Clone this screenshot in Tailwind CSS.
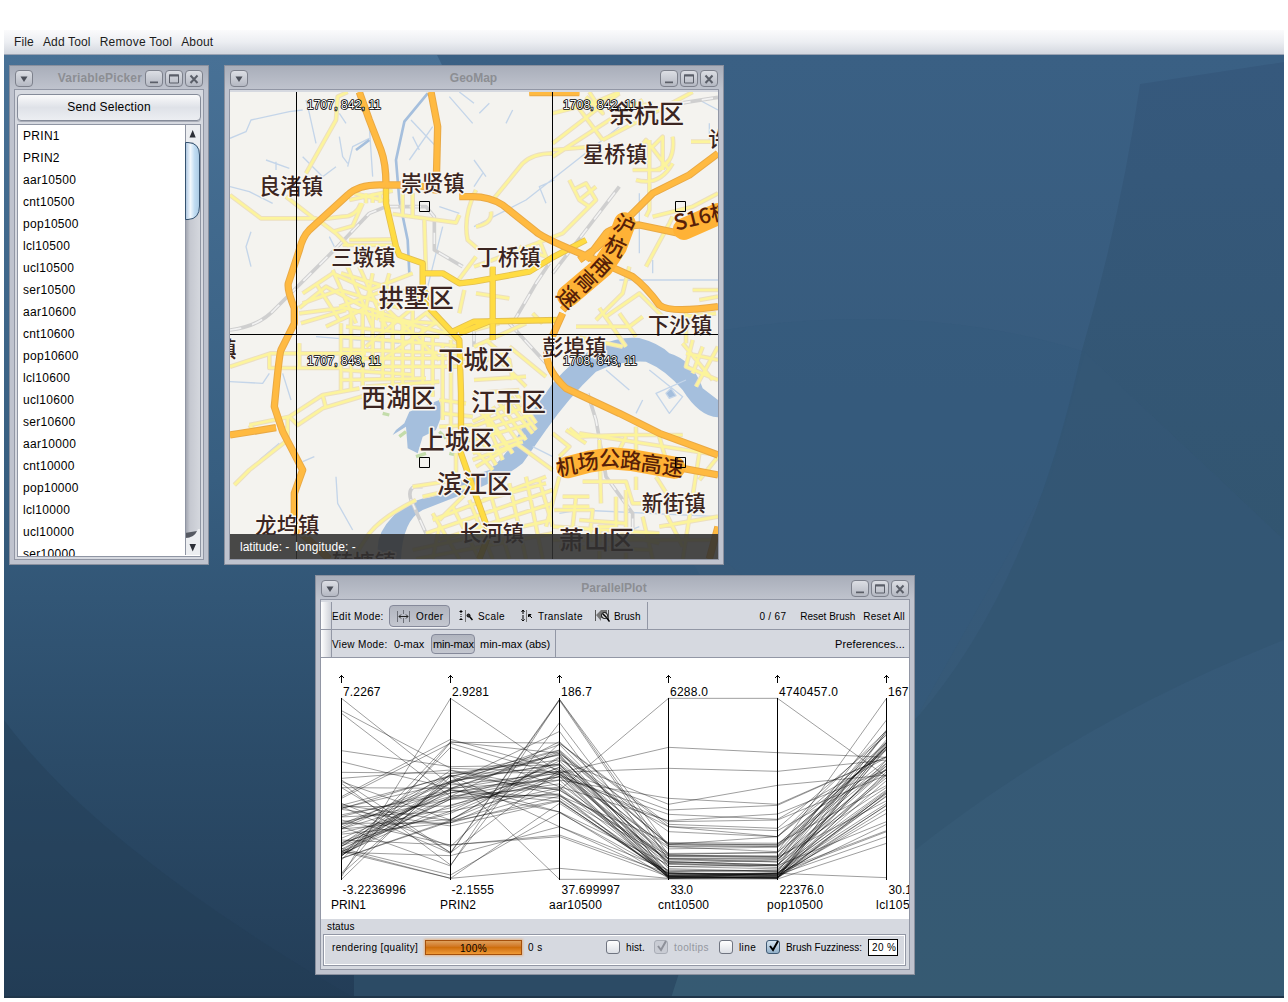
<!DOCTYPE html>
<html lang="en">
<head>
<meta charset="utf-8">
<title>GeoViz Toolkit</title>
<script src="https://cdn.jsdelivr.net/npm/@tailwindcss/browser@4"></script>
</head>
<body class="w-[1288px] h-[1002px] overflow-hidden bg-white font-['Liberation_Sans',Arial,sans-serif] text-[12px] text-black px-1 pt-[30px]">

<!-- shared symbols -->
<svg class="hidden">
  <symbol id="btn-menu" viewBox="0 0 18 17"><path d="M5.500 6h7L9 11.500z" fill="#4b4f59"/></symbol>
  <symbol id="btn-min" viewBox="0 0 18 17"><path d="M5 12.500h8" stroke="#f4f5f8" stroke-width="2"/><path d="M5 12h8" stroke="#5b5f69" stroke-width="2"/></symbol>
  <symbol id="btn-max" viewBox="0 0 18 17"><path d="M4.500 4.500h9v8h-9z" fill="none" stroke="#5b5f69"/><path d="M4 5h10" stroke="#5b5f69" stroke-width="2"/></symbol>
  <symbol id="btn-close" viewBox="0 0 18 17"><path d="M5.500 5l7 7.500m0-7.500l-7 7.500" fill="none" stroke="#5b5f69" stroke-width="2"/></symbol>
</svg>

<nav class="h-[25px] flex items-center gap-[9px] pl-[10px] pb-px tracking-[0.15px] bg-linear-to-b from-[#fbfbfc] via-[#eceef2] to-[#d3d7df] border-b border-[#9aa3b3] text-[#1c1c1c]">
  <span>File</span><span>Add Tool</span><span class="tracking-[0.25px]">Remove Tool</span><span>About</span>
</nav>

<main class="relative h-[943px] overflow-hidden bg-[#375f83]">
  <svg class="absolute inset-0" width="1280" height="943" viewBox="4 55 1280 943">
    <defs>
      <linearGradient id="sky" x1="0" y1="0" x2="0" y2="1"><stop offset="0" stop-color="#487196"/><stop offset=".45" stop-color="#375e80"/><stop offset=".75" stop-color="#2b4b68"/><stop offset="1" stop-color="#233d57"/></linearGradient>
      <linearGradient id="facet" x1="0" y1="0" x2="0" y2="1"><stop offset="0" stop-color="#3a6084"/><stop offset=".5" stop-color="#36597a"/><stop offset="1" stop-color="#365a72"/></linearGradient>
      <linearGradient id="facet2" x1="0" y1="0" x2="0" y2="1"><stop offset="0" stop-color="#36597d"/><stop offset="1" stop-color="#325570"/></linearGradient>
    </defs>
    <path d="M4 55h1280v943H4z" fill="url(#sky)"/>
    <path d="M437 55C470 120 540 300 700 575L671 998H1284V55z" fill="url(#facet)"/>
    <path d="M1140 84L1284 62V540L1082 350Q1120 220 1140 84z" fill="url(#facet2)"/>
    <path d="M724 330Q920 300 1085 352L1050 480Q960 640 915 720L724 560z" fill="#34597b" opacity=".5"/>
    <path d="M915 720Q1030 590 1082 350L1284 540V640Q1080 720 915 850z" fill="#31526d" opacity=".45"/>
    <path d="M4 720Q100 850 354 998H4z" fill="#213b53" opacity=".35"/>
    <path d="M354 970H680L671 998H354z" fill="#2c4b65"/>
    <path d="M4 997h1280" stroke="#20364a" stroke-width="2"/>
  </svg>

  <!-- VariablePicker -->
  <section class="absolute left-[5px] top-[10px] w-[200px] h-[500px] border border-[#8a909e] bg-[#bfc3ce] flex flex-col">
    <header class="h-[23px] shrink-0 flex items-start pt-1 px-[5px] gap-[2px] bg-linear-to-b from-[#a9aeba] to-[#bfc3cd]">
      <span class="w-[18px] h-[17px] rounded-[4px] border border-[#7d818c] bg-linear-to-b from-[#dcdee4] to-[#b5b9c3]"><svg class="-m-px size-[18px]"><use href="#btn-menu"/></svg></span>
      <b class="flex-1 text-right text-[#8c8e93] leading-[17px] pr-px tracking-[0.15px]">VariablePicker</b>
      <span class="w-[18px] h-[17px] rounded-[4px] border border-[#7d818c] bg-linear-to-b from-[#dcdee4] to-[#b5b9c3]"><svg class="-m-px size-[18px]"><use href="#btn-min"/></svg></span>
      <span class="w-[18px] h-[17px] rounded-[4px] border border-[#7d818c] bg-linear-to-b from-[#dcdee4] to-[#b5b9c3]"><svg class="-m-px size-[18px]"><use href="#btn-max"/></svg></span>
      <span class="w-[18px] h-[17px] rounded-[4px] border border-[#7d818c] bg-linear-to-b from-[#dcdee4] to-[#b5b9c3]"><svg class="-m-px size-[18px]"><use href="#btn-close"/></svg></span>
    </header>
    <div class="mx-1 mb-1 flex-1 min-h-0 border border-[#9297a5] bg-[#d6d9e0] px-[2px] pt-1 pb-[2px] flex flex-col gap-[3px]">
      <button class="h-[27px] shrink-0 rounded-[4px] border border-[#858b99] bg-linear-to-b from-[#fafafb] via-[#dfe2e8] to-[#eceef2] tracking-[0.2px] leading-none pb-[2px] shadow-[0_1px_0_#a9adb8]">Send Selection</button>
      <div class="flex-1 min-h-0 border border-[#8f95a3] bg-white flex overflow-hidden">
        <ul class="flex-1 pl-[5px] leading-[22px] tracking-[0.3px]">
          <li>PRIN1</li><li>PRIN2</li><li>aar10500</li><li>cnt10500</li><li>pop10500</li><li>lcl10500</li><li>ucl10500</li><li>ser10500</li><li>aar10600</li><li>cnt10600</li><li>pop10600</li><li>lcl10600</li><li>ucl10600</li><li>ser10600</li><li>aar10000</li><li>cnt10000</li><li>pop10000</li><li>lcl10000</li><li>ucl10000</li><li>ser10000</li>
        </ul>
        <svg class="shrink-0" width="15" height="430" viewBox="0 0 15 430">
          <defs>
            <linearGradient id="track"><stop offset="0" stop-color="#9a9ea9"/><stop offset=".3" stop-color="#c5c8d0"/><stop offset="1" stop-color="#d6d9df"/></linearGradient>
            <linearGradient id="thumb"><stop offset="0" stop-color="#a9c3de"/><stop offset=".35" stop-color="#f2f8fd"/><stop offset=".65" stop-color="#c0dcf2"/><stop offset="1" stop-color="#a9c9e3"/></linearGradient>
          </defs>
          <path d="M0 0h16v430H0z" fill="url(#track)"/>
          <path d="M0 0h16v26L8 17H0zM0 413q10 0 13-9h3v27H0z" fill="#eceef1"/>
          <path d="M0 413q9 0 12-7l-12 2z" fill="#555962"/>
          <path d="M.5 0v430" stroke="#8f95a3"/>
          <path d="M.5 17.500H3Q14.500 18 14.500 30V81Q14.500 94 3 94.500H.5z" fill="url(#thumb)" stroke="#365370"/>
          <path d="M4.500 12.500L7.700 5l3 7.500zM4.500 419h6.500l-3.300 7.500z" fill="#2d3038"/>
        </svg>
      </div>
    </div>
  </section>

  <!-- GeoMap -->
  <section class="absolute left-[220px] top-[10px] w-[500px] h-[500px] border border-[#8a909e] bg-[#bfc3ce] flex flex-col">
    <header class="h-[23px] shrink-0 flex items-start pt-1 px-[5px] gap-[2px] bg-linear-to-b from-[#a9aeba] to-[#bfc3cd]">
      <span class="w-[18px] h-[17px] rounded-[4px] border border-[#7d818c] bg-linear-to-b from-[#dcdee4] to-[#b5b9c3]"><svg class="-m-px size-[18px]"><use href="#btn-menu"/></svg></span>
      <b class="flex-1 text-center text-[#8c8e93] leading-[17px] pl-[39px]">GeoMap</b>
      <span class="w-[18px] h-[17px] rounded-[4px] border border-[#7d818c] bg-linear-to-b from-[#dcdee4] to-[#b5b9c3]"><svg class="-m-px size-[18px]"><use href="#btn-min"/></svg></span>
      <span class="w-[18px] h-[17px] rounded-[4px] border border-[#7d818c] bg-linear-to-b from-[#dcdee4] to-[#b5b9c3]"><svg class="-m-px size-[18px]"><use href="#btn-max"/></svg></span>
      <span class="w-[18px] h-[17px] rounded-[4px] border border-[#7d818c] bg-linear-to-b from-[#dcdee4] to-[#b5b9c3]"><svg class="-m-px size-[18px]"><use href="#btn-close"/></svg></span>
    </header>
    <div class="relative mx-1 mb-1 flex-1 min-h-0 border border-[#9297a5] bg-[#d6d9e0] pt-[2px]">
      <svg class="block" width="488" height="467" viewBox="12 96 1464 1401" fill="none" stroke-linejoin="round">
        <defs>
          <g id="minor">
            <!-- north west -->
            <path d="M365 96L335 110L330 180L240 340M12 405L105 475H270L330 520L370 560M180 410L270 480L350 470Q390 470 405 430M370 420L500 392M385 400L490 425M320 515L380 498L410 430M420 400V430M440 400V428M462 400V428M500 462L690 488L700 465M595 480L600 640M530 400V470M560 400V470M350 555L500 555M370 540L500 538M750 390Q710 470 725 540L760 570M750 590L690 670M700 760L715 690"/>
            <path d="M230 700L320 640L430 690L560 640M220 744L300 680L420 744M270 670L340 780M320 630L390 790M360 610L440 800M400 620L480 800M230 730L340 690L520 744M340 740L480 690L600 700M440 640L420 744M490 640L450 780M300 800L420 744L560 790M345 640L545 700"/>
            <path d="M220 760L350 744M225 790L360 750M12 920L135 880H420M130 880V924H220M220 850V924H345M345 790V990M375 744V990M410 744V980M440 744V930M360 800L640 830M345 830L700 858M350 868L690 880M400 895H720M430 920H700M350 930L560 944M345 960L600 955M420 980L640 965M470 744V960M500 780V990M530 780V970M560 744V960M590 800V970M620 830V1010M650 850V1080M675 840V1150M480 744L640 900M560 744L420 860M640 780L470 900"/>
            <path d="M340 740L700 830M520 820L620 744M600 760L700 850M460 780L640 790"/>
            <path d="M70 1095L190 1070L290 1005L400 985M190 1070L215 1095L290 1045L440 1000M70 1095L95 1120M160 1100L185 1110V1140L70 1230L25 1275M290 1005L300 1045M185 1070V1110M640 1020L720 1030M650 1060L740 1070M640 1100L740 1095M660 1140L750 1140M690 1180V1260"/>
            <!-- north east -->
            <path d="M750 500Q800 490 795 455M800 420L890 310Q920 280 980 280M980 290L1150 180L1250 120M980 250L1110 150L1180 100M1040 120L1130 240M1090 96L1130 160L1080 110M980 270L1100 260M980 160L1100 130L1180 96M1130 240L1280 160L1400 96M1180 150L1280 130M1030 360L1060 420L1090 440L1110 420L1080 370L1040 390M1110 420L1010 520L800 600L744 620M1060 420L1110 380M870 570L900 600M940 540L960 590L880 560M1270 240V450L1260 470M1280 470L1400 440L1476 400M1340 470L1330 490L1260 620M1340 230Q1350 310 1290 330M1220 290L1260 240L1330 330M1280 260L1310 230L1310 330M1220 330L1300 330L1330 300M1230 360Q1300 380 1340 310M1395 245H1476M1210 620L1190 700L1110 780M1400 690H1476M1420 720L1476 710M1370 770L1470 760M1140 770L1240 700L1310 770M1380 744V850M1410 744V820M750 700L850 715M920 760L950 790"/>
            <path d="M744 810L820 790M744 860L900 790M780 840L850 900L860 960M744 920L800 890M800 880L900 980M744 960L900 950M740 1000L880 990M850 860L960 950M1050 800L1210 800L1250 770M1050 830L1190 860M1120 744L1200 860M1230 830L1180 760M1370 850L1460 960M1400 840L1380 920L1476 960M1430 860L1400 940M1476 860L1410 980M1380 880L1476 900"/>
            <!-- riverside streets -->
            <path d="M740 1100L900 1040M740 1140L920 1090M740 1180L900 1130M750 1220L870 1150M760 1050L850 1170M800 1040L880 1150M840 1020L920 1120M780 1080L830 1200M870 1000L930 1090M740 1160L800 1230M870 1150L980 1230M980 1120L1030 1160L1000 1190M1020 1110L1080 1150M1060 1120L1476 1185M1030 1105L1060 1130L1180 1125H1370M1230 1100V1180M1120 1140L1125 1330M1200 1130L1170 1190M1300 1130L1320 1200M1420 1180L1370 1500M1476 1190L1420 1260M1000 1250L960 1400M980 1400L1300 1420"/>
            <path d="M740 1085L890 1015M740 1120L915 1065M740 1200L890 1145M780 1060L860 1180M820 1030L900 1140M855 1010L930 1110M750 1110L810 1215"/>
            <path d="M1070 1265H1200L1220 1330H1360M1010 1310H1090M1010 1340H1090M1050 1310L1040 1400M1200 1290V1497M1170 1310V1400H1120V1497M985 1350H1100L1090 1440M1250 1370L1280 1497M1320 1360L1370 1460M1340 1330L1290 1250M980 1440L1476 1440M1000 1460L1280 1470M1300 1400L1476 1370M1230 1250V1290M1060 1380L1200 1390M1160 1420L1300 1450"/>
            <path d="M560 1280L690 1260M570 1320Q470 1370 430 1420L380 1497M590 1310L720 1280M640 1380L720 1300M600 1420L980 1290M640 1440L980 1330M620 1380L960 1250M620 1360L700 1497M680 1340L760 1497M730 1320L800 1497M790 1290L850 1497M850 1270L900 1497M900 1250L950 1497M560 1470L980 1380M570 1497L980 1420M640 1400L620 1497M940 1260L980 1400M770 1320L960 1270"/>
          </g>
          <g id="arterial">
            <path d="M480 380V430L510 560L520 585L590 610V640H650L700 670L744 665L910 635L980 592L1080 540M590 640V690L620 720M560 690L610 744L700 840L705 1000V1180L740 1280L790 1420L760 1497M680 815L744 785L1000 780M800 620V840M700 820L800 780"/>
          </g>
          <g id="motorway">
            <path d="M400 96L430 180L465 270Q480 310 480 375M480 375H570L640 390M480 375Q400 370 365 405L250 510Q230 530 220 570L187 670Q183 690 205 744V790L165 870Q160 880 145 1040L170 1115L230 1230L205 1300V1400L310 1497M12 1125L150 1103M615 96L635 200L630 400M700 410H740Q790 410 830 435L930 515Q950 535 1110 600L1220 650Q1260 680 1300 735Q1330 760 1476 740M1476 280L1390 345L1280 400L1210 470L1110 565L1060 600M1080 600L1140 520Q1160 500 1240 495L1360 520M1010 760L965 860Q950 920 1020 985L1180 1060L1300 1120L1476 1185M1370 1225L1476 1245M910 98H1060M1476 1400L1450 1497M1010 750L1190 540"/>
          </g>
        </defs>
        <path d="M12 96h1464v1401H12z" fill="#f4f3ef"/>
        <!-- water -->
        <path d="M1110 860Q1180 828 1240 834Q1300 850 1330 880Q1400 900 1430 985L1476 1020V1072Q1420 1070 1370 990Q1320 930 1260 905Q1180 900 1110 935Q1030 1010 960 1110L890 1210Q830 1260 680 1315L590 1350Q530 1380 525 1497H460Q440 1430 500 1370Q540 1320 620 1310Q690 1260 790 1230Q860 1170 900 1080Q960 1000 980 970Q1040 900 1110 860z" fill="#a5bfdd"/>
        <path d="M550 1055L640 1020L650 1060L630 1110L590 1130L575 1180L545 1165L540 1100L500 1125L510 1110L535 1090z" fill="#a5bfdd"/>
        <path d="M470 1060l20 5M520 1130l20 -15M570 1190l30-10M640 1115l20 20M670 1180l20 5" stroke="#c3dcaa" stroke-width="10"/>
        <g stroke="#c4d5e9" stroke-width="4">
          <path d="M12 235L60 215L75 180L190 155L230 150M120 300L190 325M150 305V330M75 515L60 560L75 620M230 290L290 350L330 320M340 230L350 290L365 310M430 200L440 350M12 380L70 395L140 430M340 160L360 190M270 250L250 160L240 120M365 320L380 260L430 235M620 200L550 300M555 180L640 270M560 230L580 270M670 110L740 190M700 96L744 130M650 500L600 700M640 440L700 460M310 530L325 560M12 965L110 970L130 940M170 940L195 1020M270 830L520 850M100 1200L160 1150M230 1205L265 1190M330 1250L335 1330L380 1410M744 300L780 350M744 380L770 340M840 190L860 150M760 160L790 130M744 500L900 420L1180 200M960 430L940 380L985 360M1240 400V580M1280 640V600M1180 660L1300 660H1476M1140 930L1210 990M1270 930L1370 1010L1330 1060L1290 1000L1380 960M1230 1060L1250 1020M1000 1360L1060 1350L1476 1370M920 1160L980 1190M1140 1440L1240 1400M1420 120L1476 150M1450 250V190"/>
          <path d="M605 100L535 185L510 300L520 420L545 540L550 640M390 270L430 240" stroke="#a5bfdd" stroke-width="8"/>
          <path d="M1320 1000l15 -15l15 22l-20 8z" fill="#a5bfdd"/>
        </g>
        <!-- railways -->
        <g stroke="#cfcfcf" stroke-width="11"><path id="rail" d="M12 810Q100 800 150 744L320 575L430 460L480 440H600L625 470V570L710 620M980 640L1080 510L1180 380M860 790L930 670L970 610M850 790L960 910M744 810V860M1085 1000L1110 1080L1140 1250L1220 1360V1440M590 1280H565Q545 1290 555 1320L600 1420M1360 130L1476 112"/></g>
        <use href="#rail" stroke="#f2f2f2" stroke-width="5" stroke-dasharray="34 34"/>
        <!-- roads -->
        <use href="#minor" stroke="#ecdfc0" stroke-width="14"/>
        <use href="#minor" stroke="#fcf49c" stroke-width="8"/>
        <use href="#arterial" stroke="#e2bf52" stroke-width="19"/>
        <use href="#arterial" stroke="#ffdc42" stroke-width="14"/>
        <use href="#motorway" stroke="#e9a945" stroke-width="22"/>
        <use href="#motorway" stroke="#ffba41" stroke-width="16"/>
        <!-- place names -->
        <g font-family="'Noto Sans CJK SC',sans-serif" font-size="64" font-weight="500" fill="#3b2521" stroke="#f8f6f1" stroke-width="9" paint-order="stroke">
          <text x="99" y="401">良渚镇</text><text x="524" y="394">崇贤镇</text><text x="316" y="616">三墩镇</text>
          <text x="1071" y="305">星桥镇</text><text x="1447" y="260">许</text><text x="752" y="616">丁桥镇</text>
          <text x="1266" y="818">下沙镇</text><text x="949" y="886">彭埠镇</text><text x="-32" y="892">镇</text>
          <text x="702" y="1444">长河镇</text><text x="1247" y="1354">新街镇</text><text x="88" y="1420">龙坞镇</text><text x="318" y="1530">转塘镇</text>
          <g font-size="75">
            <text x="458" y="740">拱墅区</text><text x="1149" y="189">余杭区</text><text x="637" y="926">下城区</text>
            <text x="735" y="1052">江干区</text><text x="405" y="1041">西湖区</text><text x="581" y="1167">上城区</text>
            <text x="633" y="1298">滨江区</text><text x="999" y="1466">萧山区</text>
          </g>
        </g>
        <path d="M1196 490L1170 560L1130 620L1026 708M1024 1222L1090 1205L1155 1195L1215 1200L1345 1223M1374 507L1476 462" stroke="#ffb236" stroke-width="66" stroke-linecap="round"/>
        <g font-family="'Noto Sans CJK SC',sans-serif" font-size="64" font-weight="500" fill="#571f08" text-anchor="middle">
          <text transform="translate(1196 496) rotate(25)" y="23">沪</text><text transform="translate(1168 560) rotate(25)" y="23">杭</text><text transform="translate(1128 618) rotate(42)" y="23">甬</text><text transform="translate(1080 664) rotate(45)" y="23">高</text><text transform="translate(1026 712) rotate(45)" y="23">速</text>
          <text transform="translate(1022 1220) rotate(-10)" y="23">机</text><text transform="translate(1086 1206) rotate(-8)" y="23">场</text><text transform="translate(1151 1196)" y="23">公</text><text transform="translate(1215 1202) rotate(4)" y="23">路</text><text transform="translate(1277 1212) rotate(8)" y="23">高</text><text transform="translate(1341 1223) rotate(8)" y="23">速</text>
          <text transform="translate(1350 512) rotate(-14)" y="0" text-anchor="start">S16杭</text>
        </g>
        <!-- tile grid -->
        <path d="M211.500 96V1497M979.500 96V1497M12 823.500H1476" stroke="#000" stroke-width="3"/>
        <path d="M580.500 424.500h30v30h-30zM1348.500 424.500h30v30h-30zM580.500 1192.500h30v30h-30zM1348.500 1192.500h30v30h-30z" stroke="#000" stroke-width="3"/>
        <g font-family="'Liberation Sans',Arial,sans-serif" font-size="36" fill="#fff" stroke="#000" stroke-width="5" paint-order="stroke">
          <text x="243" y="148" textLength="222">1707, 842, 11</text><text x="1011" y="148" textLength="222">1708, 842, 11</text><text x="243" y="916" textLength="222">1707, 843, 11</text><text x="1011" y="916" textLength="222">1708, 843, 11</text>
        </g>
      </svg>
      <div class="absolute left-0 bottom-0 w-[488px] h-[25px] bg-[#303030]/88 text-white leading-[26px] pl-[10px] flex gap-[6px]"><span>latitude: -</span><span class="tracking-[0.1px]">longitude: -</span></div>
    </div>
  </section>

  <!-- ParallelPlot -->
  <section class="absolute left-[311px] top-[520px] w-[600px] h-[400px] border border-[#8a909e] bg-[#bfc3ce] flex flex-col">
    <header class="h-[23px] shrink-0 flex items-start pt-1 px-[5px] gap-[2px] bg-linear-to-b from-[#a9aeba] to-[#bfc3cd]">
      <span class="w-[18px] h-[17px] rounded-[4px] border border-[#7d818c] bg-linear-to-b from-[#dcdee4] to-[#b5b9c3]"><svg class="-m-px size-[18px]"><use href="#btn-menu"/></svg></span>
      <b class="flex-1 text-center text-[#8c8e93] leading-[17px] pl-[38px]">ParallelPlot</b>
      <span class="w-[18px] h-[17px] rounded-[4px] border border-[#7d818c] bg-linear-to-b from-[#dcdee4] to-[#b5b9c3]"><svg class="-m-px size-[18px]"><use href="#btn-min"/></svg></span>
      <span class="w-[18px] h-[17px] rounded-[4px] border border-[#7d818c] bg-linear-to-b from-[#dcdee4] to-[#b5b9c3]"><svg class="-m-px size-[18px]"><use href="#btn-max"/></svg></span>
      <span class="w-[18px] h-[17px] rounded-[4px] border border-[#7d818c] bg-linear-to-b from-[#dcdee4] to-[#b5b9c3]"><svg class="-m-px size-[18px]"><use href="#btn-close"/></svg></span>
    </header>
    <div class="mx-1 mb-1 flex-1 min-h-0 border border-[#9297a5] bg-[#d6d9e0] flex flex-col">
      <div class="h-[30px] shrink-0 border-b border-[#9297a5] flex items-stretch text-[10px] tracking-[0.4px] leading-[12px] whitespace-nowrap">
        <i class="w-[11px] mt-[2px] border-r border-[#9297a5] bg-linear-to-r from-white to-[#cfd2d9]"></i>
        <span class="w-[57px] self-center mt-[5px]">Edit Mode:</span>
        <span class="w-[61px] h-[22px] mt-[5px] rounded-[4px] border border-[#85899a] bg-linear-to-b from-[#b1b5bf] to-[#c4c7d0] flex items-center pl-[7px] shadow-[0_1px_0_#f0f1f4]">
          <svg width="14" height="13" viewBox="0 0 14 13" fill="none"><path d="M.5 1v11M12.500 1v11M6.500 0v4M6.500 8v5" stroke="#6c6f77"/><path d="M2 6.500h9M4 4.500l-2 2 2 2M9 4.500l2 2-2 2" stroke="#222"/></svg>
          <span class="ml-[5px] mt-px">Order</span>
        </span>
        <svg class="ml-[9px] mt-[9px]" width="14" height="13" viewBox="0 0 14 13" fill="none"><path d="M.5 2.500h3M2 1v3M.5 10.500h3" stroke="#000"/><path d="M2 5v5" stroke="#000" stroke-dasharray="1 1"/><path d="M6.500 1v12" stroke="#777"/><circle cx="9.500" cy="6.500" r="1.500" fill="#333" stroke="#000"/><path d="M10.500 7.500l3 3.500" stroke="#000" stroke-width="1.500"/></svg>
        <span class="w-[43px] ml-[5px] self-center mt-[5px]">Scale</span>
        <svg class="mt-[9px]" width="14" height="13" viewBox="0 0 14 13" fill="none"><path d="M2 1v11" stroke="#000" stroke-dasharray="4 1"/><path d="M.5 3L2 1l1.500 2M.5 10L2 12l1.500-2" stroke="#000"/><path d="M5.500 1v12" stroke="#777"/><path d="M7.500 5.500h2.500L7.500 8zM8.500 6.500l2.500 2.500" stroke="#000" fill="#000"/></svg>
        <span class="w-[57px] ml-[3px] self-center mt-[5px]">Translate</span>
        <svg class="mt-[9px]" width="15" height="13" viewBox="0 0 15 13" fill="none"><path d="M1 6l5-5v11zM6 1h6v8H6z" fill="#777"/><path d="M.5 1v11M13.500 1v11" stroke="#555"/><circle cx="9.500" cy="6.500" r="3" fill="#ddd" stroke="#000"/><path d="M11.500 8.500l3 4M8 5l3 3" stroke="#000" stroke-width="1.500"/></svg>
        <span class="w-[33px] ml-1 self-center mt-[5px] tracking-[0.1px]">Brush</span>
        <i class="border-l border-[#9297a5] mt-[2px]"></i>
        <span class="ml-auto self-center mt-[5px] mr-[14px] tracking-[0.3px]">0 / 67</span>
        <span class="self-center mt-[5px] mr-[8px] tracking-[0px]">Reset Brush</span>
        <span class="self-center mt-[5px] mr-[4px] tracking-[0.25px]">Reset All</span>
      </div>
      <div class="h-[28px] shrink-0 border-b border-[#9297a5] flex items-stretch text-[11px] whitespace-nowrap">
        <i class="w-[11px] border-r border-[#9297a5] bg-linear-to-r from-white to-[#cfd2d9]"></i>
        <span class="w-[62px] self-center mt-[2px] text-[10px] tracking-[0.35px]">View Mode:</span>
        <span class="w-[37px] shrink-0 self-center mt-[2px] tracking-[-0.1px]">0-max</span>
        <span class="w-[44px] shrink-0 h-[20px] mt-[4px] rounded-[4px] border border-[#85899a] bg-linear-to-b from-[#b1b5bf] to-[#c4c7d0] leading-[19px] tracking-[-0.2px] pl-px">min-max</span>
        <span class="w-[80px] shrink-0 pl-[5px] self-center mt-[2px]">min-max (abs)</span>
        <i class="border-l border-[#9297a5]"></i>
        <span class="ml-auto self-center mt-[2px] pr-1 tracking-[0.1px]">Preferences...</span>
      </div>
      <svg class="block shrink-0 bg-white" width="588" height="261" viewBox="321 658 588 261" font-size="12">
        <g id="plot" fill="none" stroke="#000" stroke-opacity=".45" stroke-width=".85"></g>
        <g id="axes"></g>
      </svg>
      <div class="flex-1 px-[2px] text-[10px] leading-[12px]">
        <div class="h-[15px] pl-1 pt-[2px] tracking-[0.15px]">status</div>
        <div class="h-[32px] mr-px border border-[#9297a5] outline outline-white -outline-offset-2 pl-2 pr-[7px] flex items-center tracking-[0.4px] whitespace-nowrap pb-[6px]">
          <span class="w-[93px] pt-px tracking-[0.35px]">rendering [quality]</span>
          <span class="w-[97px] h-[15px] border border-[#a5500c] bg-linear-to-b from-[#dfa15b] via-[#cf6f0c] to-[#f09a35] text-center leading-[15px] shadow-[0_0_2px_1px_#e2b48a]">100%</span>
          <span class="ml-[6px] pt-px">0 s</span>
          <span class="flex-1"></span>
          <i class="size-[14px] rounded-[3px] border border-[#6f7480] bg-linear-to-b from-white to-[#dcdfe5]"></i>
          <span class="w-[28px] ml-[6px] pt-[2px] tracking-[0.1px]">hist.</span>
          <i class="size-[14px] rounded-[3px] border border-[#a9adb6] bg-[#c9ccd4]"><svg width="14" height="14" class="-mt-[2px]" fill="none"><path d="M3 7l3 4 5-9" stroke="#8d9099" stroke-width="2"/></svg></i>
          <span class="w-[45px] ml-[6px] pt-[2px] text-[#94979f]">tooltips</span>
          <i class="size-[14px] rounded-[3px] border border-[#6f7480] bg-linear-to-b from-white to-[#dcdfe5]"></i>
          <span class="w-[27px] ml-[6px] pt-[2px]">line</span>
          <i class="size-[14px] rounded-[3px] border border-[#3f5a74] bg-linear-to-b from-[#d4e3ef] to-[#92b0c9]"><svg width="14" height="14" class="-mt-[2px]" fill="none"><path d="M3 7l3 4 5-9" stroke="#000" stroke-width="2"/></svg></i>
          <span class="w-[82px] ml-[6px] pt-[2px] tracking-[-0.05px]">Brush Fuzziness:</span>
          <span class="w-[30px] h-[17px] border border-black bg-white leading-[15px] pl-[3px]">20 %</span>
        </div>
      </div>
    </div>
  </section>
</main>

<script>
  // Parallel coordinates: axis positions, labels and one polyline per record.
  const axes = [
    [341.5, '7.2267', '-3.2236996', 'PRIN1', 331, 366, 380.5, 406],
    [450.5, '2.9281', '-2.1555', 'PRIN2', 440, 476, 489, 494],
    [559.5, '186.7', '37.699997', 'aar10500', 549, 602, 592, 620],
    [668.5, '6288.0', '33.0', 'cnt10500', 658, 709, 708, 693],
    [777.5, '4740457.0', '22376.0', 'pop10500', 767, 823, 838, 824],
    [886.5, '167.7', '30.1', 'lcl10500', 876, 924, 919, 912],
  ];
  const t = (x, y, s, end) => `<text x="${x}" y="${y}" textLength="${end - x}">${s}</text>`;
  document.getElementById('axes').innerHTML = axes.map(([x, hi, lo, name, nx, ne, he, le]) =>
    `<path d="M${x} 698V880M${x} 683v-8m-2.500 3l2.500-2.500 2.500 2.500" fill="none" stroke="#000"/>` +
    t(x + 1.5, 696, hi, he) + t(x + (lo[0] === '-' ? 1 : 2), 894, lo, le) + t(nx, 909, name, ne)).join('');

  const rows = [
    [115, 375, 340, 560, 558, 300], [152, 325, 335, 500, 512, 330], [160, 410, 350, 463, 478, 292], [272, 320, 315, 590, 592, 260],
    [305, 385, 360, 415, 433, 290], [337, 340, 300, 433, 376, 345], [355, 330, 390, 115, 115, 350], [650, 115, 338, 262, 278, 292],
    [658, 340, 337, 325, 334, 300], [640, 247, 249, 493, 505, 225], [410, 238, 330, 450, 436, 290], [415, 250, 345, 485, 480, 345],
    [560, 345, 658, 657, 657, 550], [575, 655, 625, 655, 640, 653], [565, 645, 458, 640, 640, 430], [570, 655, 430, 640, 645, 460],
    [600, 262, 380, 482, 462, 330], [383, 578, 118, 560, 575, 115], [440, 580, 121, 600, 605, 180], [500, 618, 118, 585, 590, 210],
    [370, 615, 188, 620, 615, 215], [540, 555, 525, 640, 645, 530], [430, 560, 250, 500, 530, 248], [577, 587, 500, 630, 635, 512],
    [590, 245, 280, 515, 530, 270], [480, 555, 530, 650, 640, 515], [642, 350, 270, 553, 530, 212], [365, 480, 290, 610, 600, 245],
    [383, 385, 275, 555, 560, 260], [360, 578, 330, 635, 630, 310],
  ];
  let seed = 41;
  const rnd = () => (seed = (seed * 16807) % 2147483647) / 2147483647;
  const g = () => rnd() + rnd() + rnd() - 1.5;
  while (rows.length < 67) {
    const a = rnd() < .45 ? 575 + g() * 30 : 490 + g() * 90;
    const b = 320 + rnd() * 180 + g() * 10, c = 375 + g() * 115;
    const d = 655 - Math.pow(rnd(), 2.1) * 110;
    rows.push([a, b, c, d, Math.min(655, d + g() * 12 + 3), c - 15 + g() * 75]);
  }
  document.getElementById('plot').innerHTML = rows.map(r =>
    `<polyline points="${r.map((v, i) => axes[i][0] + ',' + (660 + v / 3).toFixed(2)).join(' ')}"/>`).join('');
</script>
</body>
</html>
